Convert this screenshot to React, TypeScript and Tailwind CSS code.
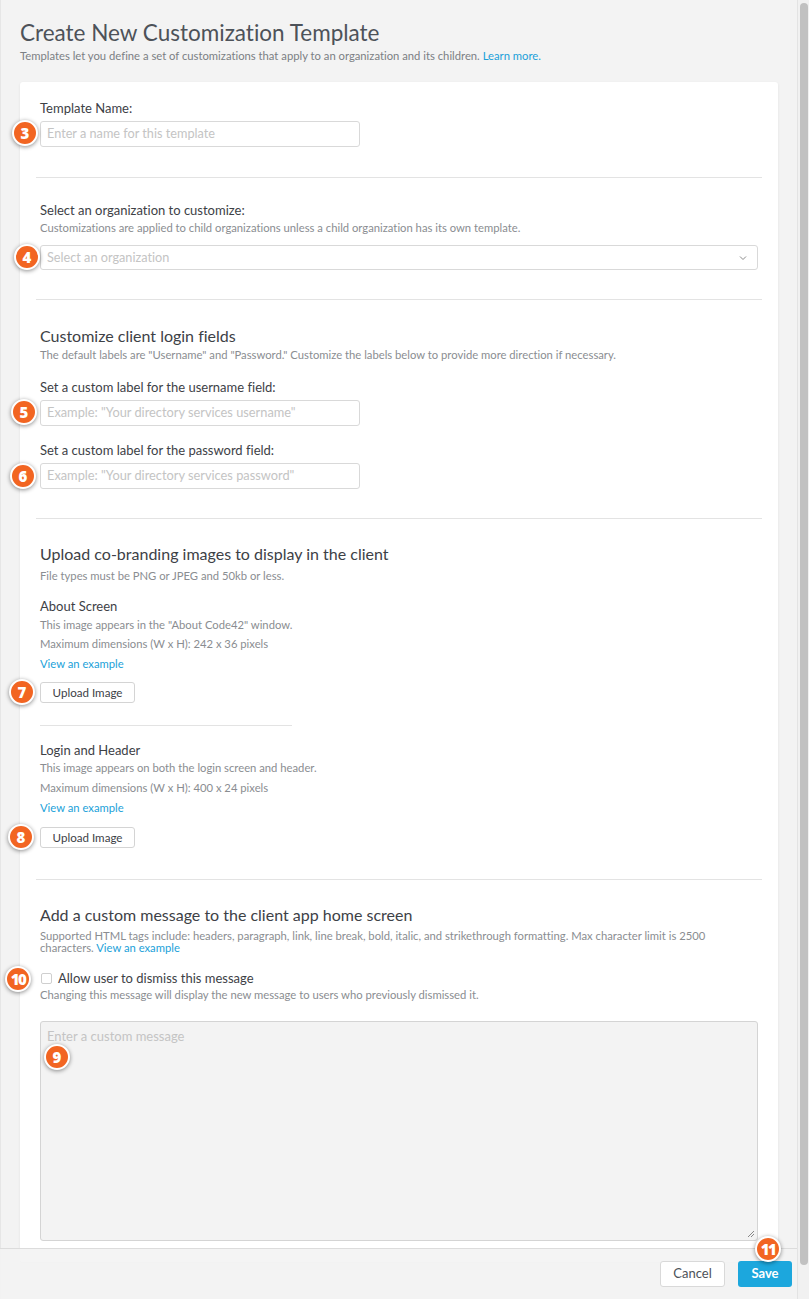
import React from "react";

function Badge({ n, className }: { n: string; className: string }) {
  return (
    <span
      className={
        "absolute flex h-[26px] w-[26px] items-center justify-center rounded-full border-2 border-white bg-[#f26522] text-[15px] font-extrabold leading-none text-white shadow-[0_1px_4px_rgba(0,0,0,0.45)] " +
        className
      }
      style={{ fontFamily: "'Open Sans', Lato, sans-serif", letterSpacing: n.length > 1 ? "-1.5px" : "0" }}
    >
      {n}
    </span>
  );
}

function Sep() {
  return <div className="-mx-1 h-px bg-[#e3e3e3]" />;
}

export default function App() {
  return (
    <div
      className="relative flex h-[1299px] w-[809px] overflow-hidden bg-[#f3f3f3] text-[#3d4146] [font-variant-ligatures:none]"
      style={{ fontFamily: "Lato, 'Open Sans', sans-serif" }}
    >
      <main className="flex-1 border-l border-[#e6e6e6] px-[19px] pb-[40px]">
        <h1 className="mt-[19px] text-[22.5px] leading-[28px] font-normal text-[#4d5259]">
          Create New Customization Template
        </h1>
        <p className="mt-[2px] text-[11.25px] leading-[14px] text-[#7b7f84]">
          Templates let you define a set of customizations that apply to an organization and its children.{" "}
          <span className="text-[#1a9fd9]">Learn more.</span>
        </p>

        <section className="mt-[19px] rounded-[3px] bg-white px-[20px] pt-[18px] pb-[21px] shadow-[0_1px_3px_rgba(0,0,0,0.07)]">
          {/* Template name */}
          <div className="text-[13px] leading-[16px]">Template Name:</div>
          <div className="relative mt-[5px] w-[320px]">
            <div className="flex h-[26px] items-center rounded-[3px] border border-[#d9d9d9] px-[6px] text-[12.7px] text-[#c4c4c4]">
              Enter a name for this template
            </div>
            <Badge n="3" className="-left-[28px] -top-px" />
          </div>

          <div className="mt-[30px]">
            <Sep />
          </div>

          {/* Organization */}
          <div className="mt-[24px] text-[13px] leading-[16px]">Select an organization to customize:</div>
          <div className="mt-[3px] text-[11.25px] leading-[14px] text-[#8a8d91]">
            Customizations are applied to child organizations unless a child organization has its own template.
          </div>
          <div className="relative mt-[10px]">
            <div className="flex h-[25px] items-center justify-between rounded-[3px] border border-[#d9d9d9] pl-[6px] pr-[10px] text-[12.7px] text-[#c4c4c4]">
              <span>Select an organization</span>
              <svg width="8" height="6" viewBox="0 0 8 6" fill="none">
                <polyline points="1,1.5 4,4.5 7,1.5" stroke="#8a8a8a" strokeWidth="1" />
              </svg>
            </div>
            <Badge n="4" className="-left-[26px] -top-px" />
          </div>

          <div className="mt-[29px]">
            <Sep />
          </div>

          {/* Login fields */}
          <h2 className="mt-[26px] text-[16px] leading-[20px] font-normal">Customize client login fields</h2>
          <div className="mt-[2px] text-[11.25px] leading-[14px] text-[#8a8d91]">
            The default labels are "Username" and "Password." Customize the labels below to provide more direction if necessary.
          </div>
          <div className="mt-[17px] text-[13px] leading-[16px]">Set a custom label for the username field:</div>
          <div className="relative mt-[5px] w-[320px]">
            <div className="flex h-[26px] items-center rounded-[3px] border border-[#d9d9d9] px-[6px] text-[12.8px] text-[#c4c4c4]">
              Example: "Your directory services username"
            </div>
            <Badge n="5" className="-left-[29px] -top-px" />
          </div>
          <div className="mt-[16px] text-[13px] leading-[16px]">Set a custom label for the password field:</div>
          <div className="relative mt-[5px] w-[320px]">
            <div className="flex h-[26px] items-center rounded-[3px] border border-[#d9d9d9] px-[6px] text-[12.8px] text-[#c4c4c4]">
              Example: "Your directory services password"
            </div>
            <Badge n="6" className="-left-[30px] top-0" />
          </div>

          <div className="mt-[29px]">
            <Sep />
          </div>

          {/* Co-branding */}
          <h2 className="mt-[25px] text-[16px] leading-[20px] font-normal">
            Upload co-branding images to display in the client
          </h2>
          <div className="mt-[5px] text-[11.25px] leading-[14px] text-[#8a8d91]">
            File types must be PNG or JPEG and 50kb or less.
          </div>

          <div className="mt-[15px] text-[13px] leading-[16px]">About Screen</div>
          <div className="mt-[4px] text-[11.25px] leading-[14px] text-[#8a8d91]">
            This image appears in the "About Code42" window.
          </div>
          <div className="mt-[5px] text-[11.25px] leading-[14px] text-[#8a8d91]">
            Maximum dimensions (W x H): 242 x 36 pixels
          </div>
          <div className="mt-[6px] text-[11.25px] leading-[14px] text-[#1a9fd9]">View an example</div>
          <div className="relative mt-[11px] w-[95px]">
            <div className="flex h-[21px] items-center justify-center rounded-[3px] border border-[#d4d4d4] bg-white text-[11.6px] text-[#3d4146]">
              Upload Image
            </div>
            <Badge n="7" className="-left-[31px] -top-[3px]" />
          </div>

          <div className="mt-[22px] h-px w-[252px] bg-[#e3e3e3]" />

          <div className="mt-[16px] text-[13px] leading-[16px]">Login and Header</div>
          <div className="mt-[3px] text-[11.25px] leading-[14px] text-[#8a8d91]">
            This image appears on both the login screen and header.
          </div>
          <div className="mt-[6px] text-[11.25px] leading-[14px] text-[#8a8d91]">
            Maximum dimensions (W x H): 400 x 24 pixels
          </div>
          <div className="mt-[6px] text-[11.25px] leading-[14px] text-[#1a9fd9]">View an example</div>
          <div className="relative mt-[12px] w-[95px]">
            <div className="flex h-[21px] items-center justify-center rounded-[3px] border border-[#d4d4d4] bg-white text-[11.6px] text-[#3d4146]">
              Upload Image
            </div>
            <Badge n="8" className="-left-[32px] -top-[3px]" />
          </div>

          <div className="mt-[31px]">
            <Sep />
          </div>

          {/* Custom message */}
          <h2 className="mt-[25px] text-[16px] leading-[20px] font-normal">
            Add a custom message to the client app home screen
          </h2>
          <div className="mt-[5px] text-[11.25px] leading-[12px] text-[#8a8d91]">
            Supported HTML tags include: headers, paragraph, link, line break, bold, italic, and strikethrough formatting. Max character limit is 2500
            <br />
            characters. <span className="text-[#1a9fd9]">View an example</span>
          </div>
          <div className="relative mt-[16px] flex items-center">
            <span className="ml-px h-[11px] w-[11px] rounded-[2px] border border-[#cfcfcf] bg-white" />
            <span className="ml-[6px] text-[13px] leading-[16px]">Allow user to dismiss this message</span>
            <Badge n="10" className="-left-[35px] -top-[4px]" />
          </div>
          <div className="mt-[2px] text-[11.25px] leading-[14px] text-[#8a8d91]">
            Changing this message will display the new message to users who previously dismissed it.
          </div>
          <div className="relative mt-[19px]">
            <div className="h-[220px] rounded-[3px] border border-[#d4d4d4] bg-[#f3f3f3] px-[6px] pt-[6px] text-[13px] leading-[16px] text-[#c4c4c4]">
              Enter a custom message
            </div>
            <svg className="absolute bottom-[3px] right-[3px]" width="8" height="8" viewBox="0 0 8 8">
              <line x1="1" y1="7" x2="7" y2="1" stroke="#888" strokeWidth="1" />
              <line x1="4" y1="7" x2="7" y2="4" stroke="#888" strokeWidth="1" />
            </svg>
            <Badge n="9" className="left-[4px] top-[23px]" />
          </div>
        </section>
      </main>

      {/* Footer bar */}
      <footer className="absolute bottom-0 left-0 right-0 flex h-[51px] justify-end gap-[13px] border-t border-[#dcdcdc] bg-[#f3f3f3]/90 pt-[12px] pr-[17px]">
        <div className="flex h-[26px] w-[65px] items-center justify-center rounded-[3px] border border-[#d9d9d9] bg-white text-[13px] text-[#4d5259]">
          Cancel
        </div>
        <div className="relative flex h-[26px] w-[54px] items-center justify-center rounded-[3px] bg-[#1ca7dd] text-[13px] font-bold text-white">
          Save
          <Badge n="11" className="left-[17px] -top-[25px]" />
        </div>
      </footer>

      {/* Scrollbar */}
      <div className="relative z-10 h-[1299px] w-[12px] border-l border-[#e3e3e3] bg-[#f1f1f1] pt-[3px]">
        <div className="ml-[2px] h-[1262px] w-[8px] rounded-full bg-[#c1c1c1]" />
      </div>
    </div>
  );
}
